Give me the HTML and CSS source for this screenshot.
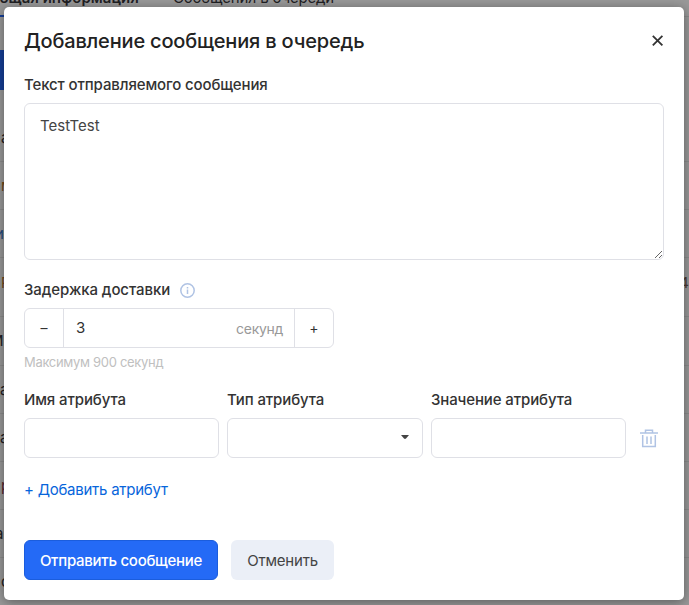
FILE: index.html
```html
<!DOCTYPE html>
<html lang="ru">
<head>
<meta charset="utf-8">
<title>Добавление сообщения в очередь</title>
<link rel="stylesheet" href="styles.css">
</head>
<body>
<div class="page">
  <nav class="tabs"><b class="tab tab-active">Общая информация</b><span class="tab">Сообщения в очереди</span></nav>
  <div class="toolbar"><div class="toolbar-button"></div></div>
  <div class="rows">
    <div class="row first"><span>а</span></div>
    <div class="row"><span class="brown">м</span></div>
    <div class="row"><span class="blue wide">и</span></div>
    <div class="row tall"><span class="brown">Р</span><span class="count">4</span></div>
    <div class="row"><span class="capital">М</span></div>
    <div class="row"><span class="pair">ца</span></div>
    <div class="row"><span class="pair">ца</span></div>
    <div class="row"><span class="red">р</span></div>
    <div class="row"><span class="wide">а</span></div>
    <div class="row"><span>с</span></div>
  </div>
</div>
<main class="modal">
  <header class="header">
    <h1>Добавление сообщения в очередь</h1>
    <svg class="close" width="12" height="12" viewBox="0 0 12 12"><path d="M.8 .8l9.6 9.6M10.4 .8L.8 10.4"/></svg>
  </header>
  <label class="label" for="message">Текст отправляемого сообщения</label>
  <textarea id="message" class="message">TestTest</textarea>
  <div class="label delay-label">Задержка доставки
    <svg class="info" width="15" height="15" viewBox="0 0 15 15"><circle cx="7.5" cy="7.5" r="6.7"/><path d="M7.5 6.5v4.5M7.5 4v1.4"/></svg>
  </div>
  <div class="stepper">
    <span class="step">–</span>
    <div class="amount"><span>3</span><span class="unit">секунд</span></div>
    <span class="step">+</span>
  </div>
  <div class="hint">Максимум 900 секунд</div>
  <div class="attributes">
    <div><div class="label">Имя атрибута</div><div class="field"></div></div>
    <div><div class="label">Тип атрибута</div><div class="field select"><svg width="8" height="4" viewBox="0 0 8 4"><path d="M0 0h8L5 3.5Q4 4.3 3 3.5z"/></svg></div></div>
    <div><div class="label">Значение атрибута</div><div class="field"></div></div>
    <svg class="trash" width="18" height="19" viewBox="0 0 18 19"><path d="M0 4h18M5.5 4V1.2h7V4M2.7 6v11.4h12.6V6M7 7.5V15M11 7.5V15"/></svg>
  </div>
  <a class="add">+ Добавить атрибут</a>
  <footer class="actions"><button class="button primary">Отправить сообщение</button><button class="button">Отменить</button></footer>
</main>
</body>
</html>
```
FILE: styles.css
```css
* { box-sizing: border-box; }
body { margin: 0; height: 605px; overflow: hidden; padding: 7px 5px 5px 4px; background: #999; font: 15px/20px Inter, "Liberation Sans", sans-serif; color: #333; }
.page { position: absolute; inset: 0; overflow: hidden; color: #1f2023; }
.tabs { display: flex; gap: 35px; height: 17px; margin-left: -12px; border-bottom: 1px solid #8b8b8b; white-space: nowrap; }
.tab { height: 29px; line-height: 20px; margin-top: -12px; flex: none; letter-spacing: -.2px; }
.tab-active { width: 150px; font-size: 15px; font-weight: 600; letter-spacing: 0; border-bottom: 2px solid #153f97; }
.toolbar { height: 97px; padding-top: 33px; }
.toolbar-button { width: 100px; height: 40px; background: #153f97; }
.row { display: flex; justify-content: space-between; height: 48.2px; padding-top: 14px; border-bottom: 1px solid #8c8c8c; white-space: nowrap; margin-right: -2px; }
.row span { margin-left: 1px; }
.row.first { height: 48px; }
.row.tall { height: 59px; padding-top: 15px; }
.row .wide { margin-left: -5px; }
.row .capital { margin-left: -10px; }
.row .pair { margin-left: -9px; }
.row .count { margin-right: 2px; color: #4c3a32; }
.brown { color: #704719; }
.blue { color: #244a7d; }
.red { color: #582630; }
.modal { position: relative; width: 680px; height: 593px; padding: 20px; background: #fff; border-radius: 5px; box-shadow: 0 2px 12px rgba(0, 0, 0, .4); }
.header { display: flex; justify-content: space-between; height: 48px; }
h1 { margin: 0; font-size: 20px; line-height: 28px; font-weight: 500; letter-spacing: -.18px; color: #222; white-space: nowrap; }
.close { margin: 8px 0 0; fill: none; stroke: #333; stroke-width: 1.8; }
.label { display: block; height: 28px; font-size: 15px; line-height: 20px; font-weight: 500; letter-spacing: -.12px; white-space: nowrap; }
.message { display: block; width: 640px; height: 157px; padding: 12px 15px; border: 1px solid #dfe0e6; border-radius: 6px; outline: 0; resize: both; font: inherit; color: #444; }
.delay-label { display: flex; gap: 10px; margin-top: 20px; letter-spacing: -.08px; }
.info { margin-top: 3px; fill: none; stroke: #b0c3e4; stroke-width: 1.5; }
.stepper { display: flex; width: 310px; height: 40px; border: 1px solid #dfe0e6; border-radius: 6px; }
.step { width: 38px; line-height: 38px; text-align: center; font-size: 14px; }
.amount { display: flex; justify-content: space-between; flex: 1; padding: 0 11px 0 12px; border: solid #dfe0e6; border-width: 0 1px; line-height: 38px; }
.unit { color: #999; font-size: 14px; line-height: 40px; letter-spacing: -.3px; }
.hint { margin-top: 5px; font-size: 13px; line-height: 19px; letter-spacing: -.31px; color: #c0c0c0; }
.attributes { display: grid; grid-template-columns: 195px 196px 195px 18px; column-gap: 8px; margin-top: 18px; height: 68px; }
.field { height: 40px; border: 1px solid #dfe0e6; border-radius: 6px; }
.select { display: flex; justify-content: flex-end; padding: 16px 13px 0; }
.select svg { fill: #444; }
.trash { margin: 39px 0 0 6px; fill: none; stroke: #b0c3e4; stroke-width: 1.5; }
.add { display: block; margin-top: 22px; letter-spacing: -.25px; color: #0765db; }
.actions { display: flex; gap: 13px; margin-top: 40px; }
.button { width: 103px; height: 40px; padding: 0; border: 0; border-radius: 6px; background: #ebeff7; font: 15px Inter, "Liberation Sans", sans-serif; letter-spacing: -.2px; color: #444; white-space: nowrap; }
.primary { width: 194px; border: 1px solid #1b5ddd; background: #246af6; color: #fff; font-weight: 500; letter-spacing: -.27px; }
```
